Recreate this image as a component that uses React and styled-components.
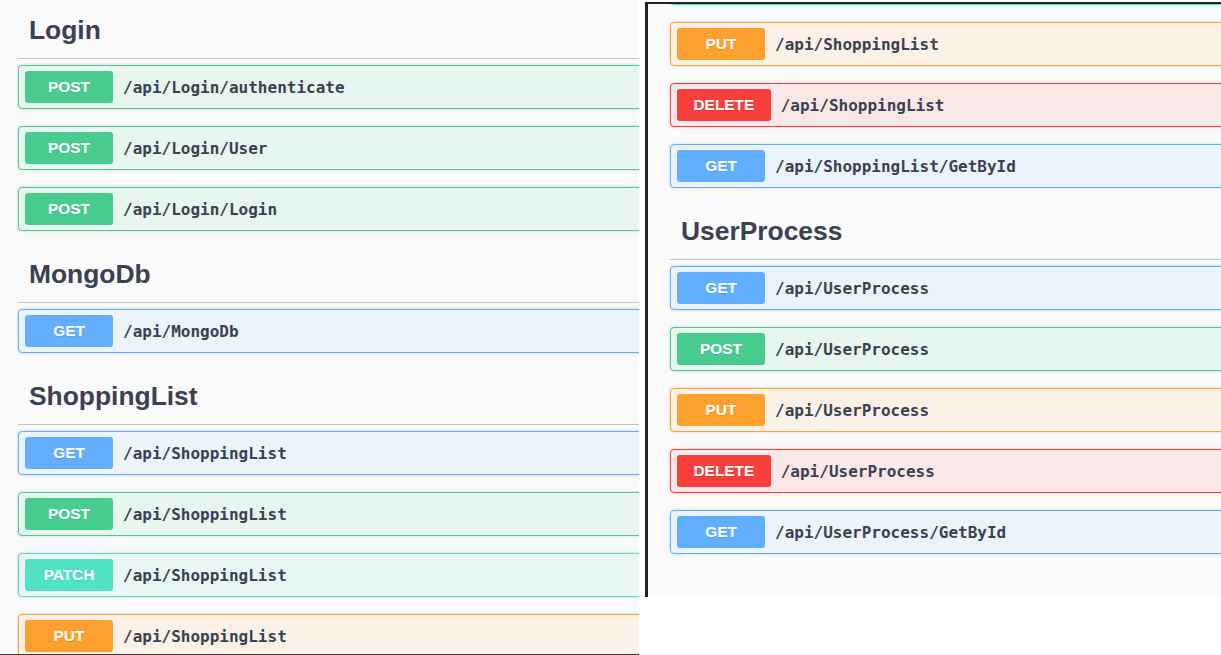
import styled, { createGlobalStyle } from "styled-components";

const GlobalStyle = createGlobalStyle`
    html, body {
        margin:0;
        padding:0;
        background:#ffffff;
    }
    body {
        font-family:"Liberation Sans", Arial, sans-serif;
    }
`;

const METHODS = {
    GET: { main: "#61affe", tint: "#ebf3fb" },
    POST: { main: "#49cc90", tint: "#e8f6f0" },
    PATCH: { main: "#50e3c2", tint: "#e9f8f4" },
    PUT: { main: "#fca130", tint: "#fbf1e6" },
    DELETE: { main: "#f93e3e", tint: "#fae7e7" },
};

const leftSections = [
    {
        name: "Login",
        ops: [
            ["POST", "/api/Login/authenticate"],
            ["POST", "/api/Login/User"],
            ["POST", "/api/Login/Login"],
        ],
    },
    {
        name: "MongoDb",
        ops: [["GET", "/api/MongoDb"]],
    },
    {
        name: "ShoppingList",
        ops: [
            ["GET", "/api/ShoppingList"],
            ["POST", "/api/ShoppingList"],
            ["PATCH", "/api/ShoppingList"],
            ["PUT", "/api/ShoppingList"],
        ],
    },
];

// second capture continues the ShoppingList tag
const rightSections = [
    {
        ops: [
            ["PUT", "/api/ShoppingList"],
            ["DELETE", "/api/ShoppingList"],
            ["GET", "/api/ShoppingList/GetById"],
        ],
    },
    {
        name: "UserProcess",
        ops: [
            ["GET", "/api/UserProcess"],
            ["POST", "/api/UserProcess"],
            ["PUT", "/api/UserProcess"],
            ["DELETE", "/api/UserProcess"],
            ["GET", "/api/UserProcess/GetById"],
        ],
    },
];

function Operation({ method, path }) {
    return (
        <Op $method={method}>
            <Method $method={method}>{method}</Method>
            <Path>{path}</Path>
        </Op>
    );
}

function Sections({ sections }) {
    return sections.map((section, i) => (
        <section key={i}>
            {section.name && <TagHeading>{section.name}</TagHeading>}
            {section.ops.map(([method, path], j) => (
                <Operation key={j} method={method} path={path} />
            ))}
        </section>
    ));
}

function App() {
    return (
        <>
            <GlobalStyle />
            <Page>
                <LeftShot>
                    <Column>
                        <Sections sections={leftSections} />
                    </Column>
                </LeftShot>
                <RightShot>
                    <Column>
                        {/* bottom edge of the PATCH row scrolled off above */}
                        <ScrolledOff $method="PATCH" />
                        <Sections sections={rightSections} />
                    </Column>
                </RightShot>
            </Page>
        </>
    );
}

export default App;

const Page = styled.div`
    display:flex;
    align-items:flex-start;
    width:1221px;
    height:655px;
    overflow:hidden;
`;

const LeftShot = styled.div`
    flex:0 0 639px;
    height:655px;
    box-sizing:border-box;
    padding:4px 0 0 18px;
    background:#fafafa;
    border-bottom:1px solid #3a3a3a;
    overflow:hidden;
`;

const RightShot = styled.div`
    flex:0 0 576px;
    height:595px;
    margin:2px 0 0 6px;
    box-sizing:border-box;
    padding-left:22px;
    background:#fafafa;
    border-top:2px solid #1f2327;
    border-left:3px solid #1f2327;
    overflow:hidden;
`;

const Column = styled.div`
    width:900px;
`;

const TagHeading = styled.h3`
    display:flex;
    align-items:center;
    height:55px;
    box-sizing:border-box;
    margin:0 0 6px;
    padding:0 22px 2px 11px;
    border-bottom:1px solid rgba(59,65,81,.3);
    font-family:"Liberation Sans", Arial, sans-serif;
    font-size:26.4px;
    font-weight:700;
    color:#3b4151;
`;

const Op = styled.div`
    display:flex;
    align-items:center;
    height:44px;
    box-sizing:border-box;
    margin-bottom:17px;
    padding:0 6px;
    border:1px solid ${(p) => METHODS[p.$method].main};
    border-radius:4px;
    background:${(p) => METHODS[p.$method].tint};
    box-shadow:0 0 3px rgba(0,0,0,.19);
`;

const ScrolledOff = styled(Op)`
    margin-top:-43px;
`;

const Method = styled.span`
    min-width:88px;
    height:32px;
    box-sizing:border-box;
    padding:0 16.5px;
    display:flex;
    align-items:center;
    justify-content:center;
    border-radius:3px;
    background:${(p) => METHODS[p.$method].main};
    color:#fff;
    font-family:"Liberation Sans", Arial, sans-serif;
    font-size:15.4px;
    font-weight:700;
    text-shadow:0 1px 0 rgba(0,0,0,.1);
`;

const Path = styled.span`
    padding:0 10px;
    font-family:"DejaVu Sans Mono", "Liberation Mono", monospace;
    font-size:16px;
    font-weight:600;
    color:#3b4151;
`;
